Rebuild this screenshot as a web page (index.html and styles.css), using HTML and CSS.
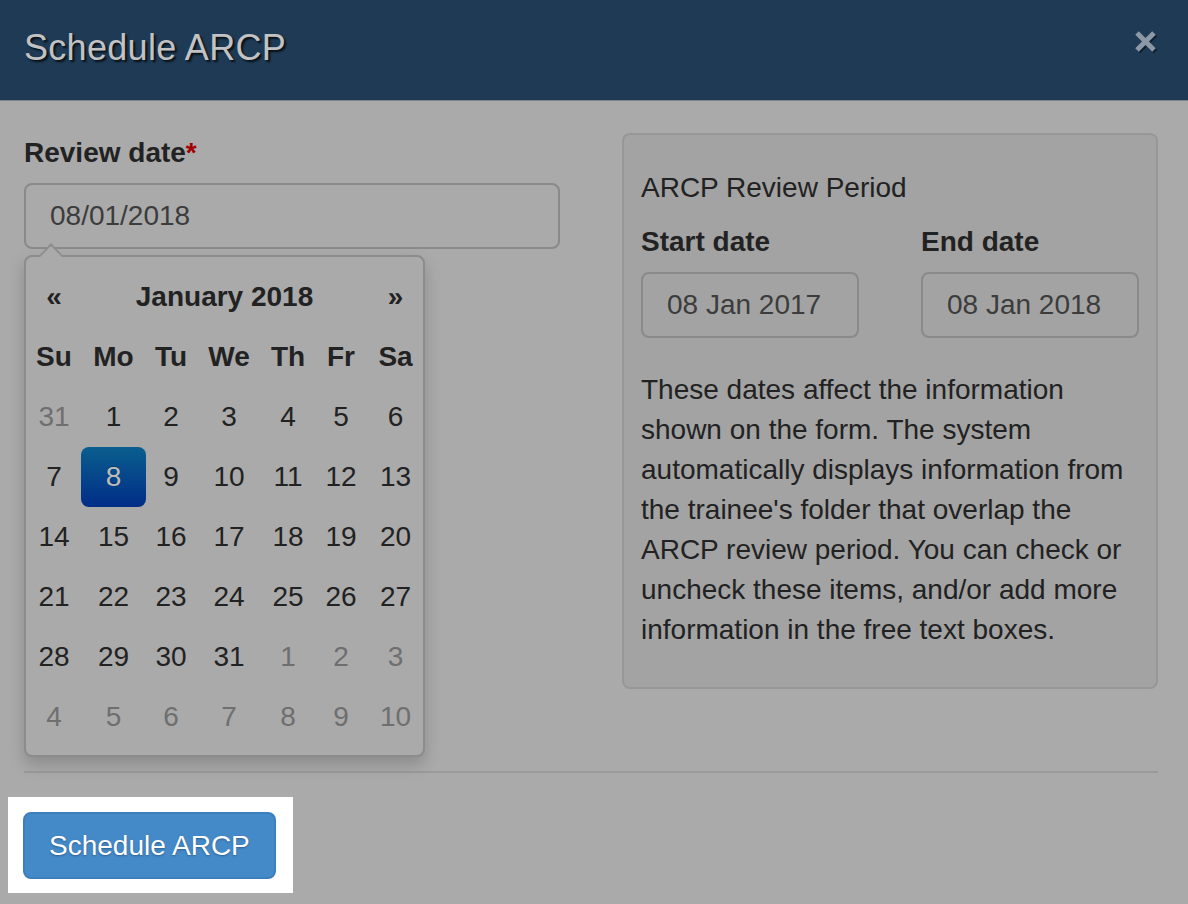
FILE: index.html
```html
<!DOCTYPE html>
<html lang="en">
<head>
<meta charset="utf-8">
<title>Schedule ARCP</title>
<link rel="stylesheet" href="styles.css">
</head>
<body>
<div class="modal">
  <div class="modal-header">
    <h4 class="modal-title">Schedule ARCP</h4>
    <span class="close" aria-label="Close">
      <svg width="21" height="21" viewBox="0 0 21 21">
        <g class="x-shadow" transform="translate(1.5,1.5)">
          <path d="M2 2 L19 19 M19 2 L2 19" />
        </g>
        <g class="x-main">
          <path d="M2 2 L19 19 M19 2 L2 19" />
        </g>
      </svg>
    </span>
  </div>

  <div class="modal-body">
    <div class="col-left">
      <label class="label">Review date<span class="req">*</span></label>
      <div class="input input-wide">08/01/2018</div>

      <div class="datepicker">
        <table class="cal">
          <colgroup>
            <col style="width:54px"><col style="width:65px"><col style="width:50px"><col style="width:66px"><col style="width:52px"><col style="width:54px"><col style="width:55px">
          </colgroup>
          <thead>
            <tr class="nav-row">
              <th class="nav">&laquo;</th>
              <th class="month" colspan="5">January 2018</th>
              <th class="nav">&raquo;</th>
            </tr>
            <tr class="dow-row">
              <th>Su</th><th>Mo</th><th>Tu</th><th>We</th><th>Th</th><th>Fr</th><th>Sa</th>
            </tr>
          </thead>
          <tbody>
            <tr><td class="old">31</td><td>1</td><td>2</td><td>3</td><td>4</td><td>5</td><td>6</td></tr>
            <tr><td>7</td><td class="active">8</td><td>9</td><td>10</td><td>11</td><td>12</td><td>13</td></tr>
            <tr><td>14</td><td>15</td><td>16</td><td>17</td><td>18</td><td>19</td><td>20</td></tr>
            <tr><td>21</td><td>22</td><td>23</td><td>24</td><td>25</td><td>26</td><td>27</td></tr>
            <tr><td>28</td><td>29</td><td>30</td><td>31</td><td class="new">1</td><td class="new">2</td><td class="new">3</td></tr>
            <tr><td class="new">4</td><td class="new">5</td><td class="new">6</td><td class="new">7</td><td class="new">8</td><td class="new">9</td><td class="new">10</td></tr>
          </tbody>
        </table>
      </div>
    </div>

    <div class="well">
      <h4 class="well-title">ARCP Review Period</h4>
      <div class="dates">
        <div class="date-col">
          <label class="label">Start date</label>
          <div class="input">08 Jan 2017</div>
        </div>
        <div class="date-col">
          <label class="label">End date</label>
          <div class="input">08 Jan 2018</div>
        </div>
      </div>
      <p class="info">These dates affect the information shown on the form. The system automatically displays information from the trainee's folder that overlap the ARCP review period. You can check or uncheck these items, and/or add more information in the free text boxes.</p>
    </div>
  </div>

  <div class="divider"></div>

  <div class="modal-footer">
    <div class="spotlight">
      <button class="btn-primary" type="button">Schedule ARCP</button>
    </div>
  </div>
</div>
</body>
</html>
```

FILE: styles.css
```css
html, body {
  margin: 0;
  padding: 0;
}

body {
  background: #aaaaaa;
  font-family: "Liberation Sans", Arial, Helvetica, sans-serif;
  font-size: 28px;
  line-height: 40px;
  color: #222222;
  width: 1188px;
  height: 904px;
  overflow: hidden;
}

.modal {
  display: flex;
  flex-direction: column;
}

/* Header */
.modal-header {
  box-sizing: border-box;
  height: 101px;
  background: #1e3a54;
  border-bottom: 1px solid #7d848b;
  display: flex;
  align-items: flex-start;
  padding: 28px 32px 0 24px;
}

.modal-title {
  margin: 0;
  font-size: 36px;
  line-height: 40px;
  font-weight: normal;
  letter-spacing: 0.3px;
  color: #c2c2c2;
  text-shadow: 2px 2px 2px rgba(0, 0, 0, 0.75);
}

.close {
  margin-left: auto;
  margin-top: 3px;
  display: block;
  width: 21px;
  height: 21px;
}

.close svg {
  display: block;
  overflow: visible;
}

.x-main path {
  stroke: #8c98a5;
  stroke-width: 5;
  fill: none;
}

.x-shadow path {
  stroke: rgba(0, 0, 0, 0.45);
  stroke-width: 5;
  fill: none;
}

/* Body */
.modal-body {
  display: flex;
  gap: 62px;
  padding: 32px 30px 82px 24px;
  align-items: flex-start;
}

.col-left {
  position: relative;
  width: 536px;
  flex: 0 0 536px;
}

.label {
  display: block;
  font-weight: bold;
  color: #222222;
  margin-bottom: 10px;
}

.req {
  color: #a30000;
}

.input {
  box-sizing: border-box;
  height: 66px;
  border: 2px solid #8a8a8a;
  border-radius: 8px;
  padding: 11px 24px;
  color: #3c3c3c;
  background: #aaaaaa;
  white-space: nowrap;
}

/* Datepicker dropdown */
.datepicker {
  position: absolute;
  left: 0;
  top: 122px;
  box-sizing: border-box;
  width: 401px;
  padding: 10px 0 8px 1px;
  border: 2px solid #8c8c8c;
  border-radius: 8px;
  background: #aaaaaa;
  box-shadow: 0 8px 16px rgba(0, 0, 0, 0.18);
  z-index: 5;
}

.datepicker::before {
  content: "";
  position: absolute;
  left: 12px;
  top: -14px;
  border-left: 13px solid transparent;
  border-right: 13px solid transparent;
  border-bottom: 14px solid #8c8c8c;
}

.datepicker::after {
  content: "";
  position: absolute;
  left: 14px;
  top: -11px;
  border-left: 11px solid transparent;
  border-right: 11px solid transparent;
  border-bottom: 11px solid #aaaaaa;
}

.cal {
  border-collapse: separate;
  border-spacing: 0;
  table-layout: fixed;
  width: 396px;
}

.cal th,
.cal td {
  height: 60px;
  padding: 0;
  text-align: center;
  vertical-align: middle;
}

.cal th {
  font-weight: bold;
  color: #222222;
}

.cal .nav {
  font-weight: bold;
}

.cal td {
  color: #222222;
}

.cal td.old,
.cal td.new {
  color: #6f6f6f;
}

.cal td.active {
  background: linear-gradient(to bottom, #0a5e8e, #012d87);
  border-radius: 8px;
  color: #bdbdbd;
  text-shadow: 0 -1px 0 rgba(0, 0, 0, 0.25);
}

/* Well */
.well {
  box-sizing: border-box;
  flex: 0 0 536px;
  width: 536px;
  background: #a3a3a3;
  border: 2px solid #979797;
  border-radius: 8px;
  padding: 17px 19px 17px 17px;
}

.well-title {
  margin: 16px 0 14px;
  font-size: 28px;
  line-height: 40px;
  font-weight: normal;
  color: #222222;
}

.dates {
  display: grid;
  grid-template-columns: 218px 218px;
  column-gap: 62px;
}

.dates .input {
  background: #a3a3a3;
}

.info {
  margin: 32px 0 20px;
  color: #222222;
}

/* Footer */
.divider {
  height: 2px;
  background: #9b9b9b;
  margin: 0 30px 0 24px;
}

.modal-footer {
  display: flex;
  padding: 24px 0 0 8px;
}

.spotlight {
  background: #ffffff;
  padding: 15px 17px 14px 15px;
}

.btn-primary {
  display: block;
  box-sizing: border-box;
  height: 67px;
  padding: 0 24px;
  margin: 0;
  border: 2px solid #3b7fbd;
  border-radius: 8px;
  background: #4489c8;
  color: #ffffff;
  font-family: "Liberation Sans", Arial, Helvetica, sans-serif;
  font-size: 28px;
  line-height: 40px;
  text-shadow: 0 1px 2px rgba(0, 0, 0, 0.3);
  cursor: pointer;
}
```
